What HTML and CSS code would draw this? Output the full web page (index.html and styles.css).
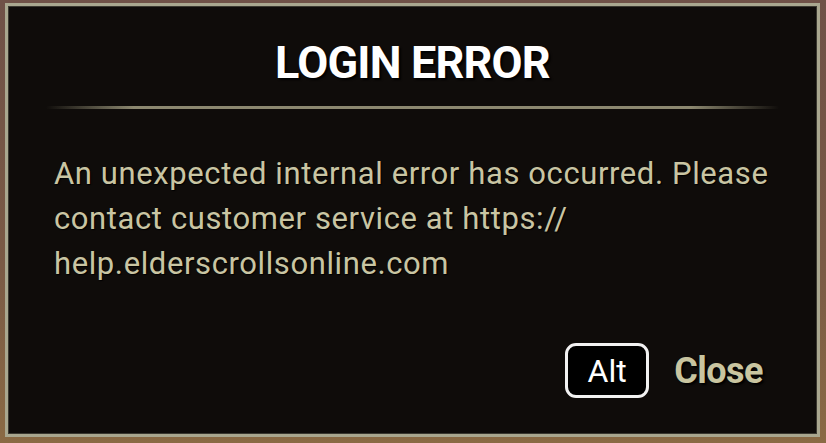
FILE: index.html
```html
<!DOCTYPE html>
<html>
<head>
<meta charset="utf-8">
<link rel="stylesheet" href="styles.css">
</head>
<body>
<div class="frame">
  <div class="panel">
    <h1 class="title">LOGIN ERROR</h1>
    <div class="divider"></div>
    <p class="message">An unexpected internal error has occurred. Please contact customer service at https:// help.elderscrollsonline.com</p>
    <div class="actions">
      <span class="key">Alt</span>
      <span class="close">Close</span>
    </div>
  </div>
</div>
</body>
</html>
```
FILE: styles.css
```css
html, body {
  margin: 0;
  padding: 0;
  background: #6e5040;
}
body {
  width: 826px;
  height: 443px;
  overflow: hidden;
}
.frame {
  box-sizing: border-box;
  width: 826px;
  height: 443px;
  padding: 3px 6px 6px 5px;
  background: linear-gradient(180deg, #6f5147 0%, #7a5a45 60%, #8a6a44 100%);
}
.panel {
  box-sizing: border-box;
  height: 100%;
  border: 3px solid #a9a78f;
  box-shadow: inset 0 0 0 1px #3a3830;
  background: #0f0c0a;
  display: flex;
  flex-direction: column;
  font-family: "Roboto", "Liberation Sans", sans-serif;
}
.title {
  margin: 30px 0 0 0;
  text-align: center;
  color: #ffffff;
  font-size: 45px;
  font-weight: 700;
  line-height: 54px;
  letter-spacing: -0.8px;
  text-shadow: 2px 2px 2px #000;
}
.divider {
  margin: 16px 38px 0 38px;
  height: 3px;
  background: linear-gradient(90deg, rgba(140,136,112,0) 0%, #8c8870 12%, #8c8870 88%, rgba(140,136,112,0) 100%);
}
.message {
  margin: 42px 30px 0 46px;
  color: #c9c5a3;
  font-size: 31px;
  line-height: 45px;
  letter-spacing: 0.6px;
  text-shadow: 1px 1px 1px #000;
}
.actions {
  margin-top: auto;
  margin-bottom: 36px;
  display: flex;
  justify-content: flex-end;
  align-items: center;
  padding-right: 54px;
  gap: 25px;
}
.key {
  box-sizing: border-box;
  width: 84px;
  height: 55px;
  border: 3px solid #f2f2f2;
  border-radius: 11px;
  background: #000;
  color: #fff;
  font-size: 32px;
  display: flex;
  align-items: center;
  justify-content: center;
}
.close {
  color: #c9c5a0;
  font-size: 36px;
  font-weight: 700;
  letter-spacing: -0.5px;
  text-shadow: 2px 2px 2px #000;
}
```
